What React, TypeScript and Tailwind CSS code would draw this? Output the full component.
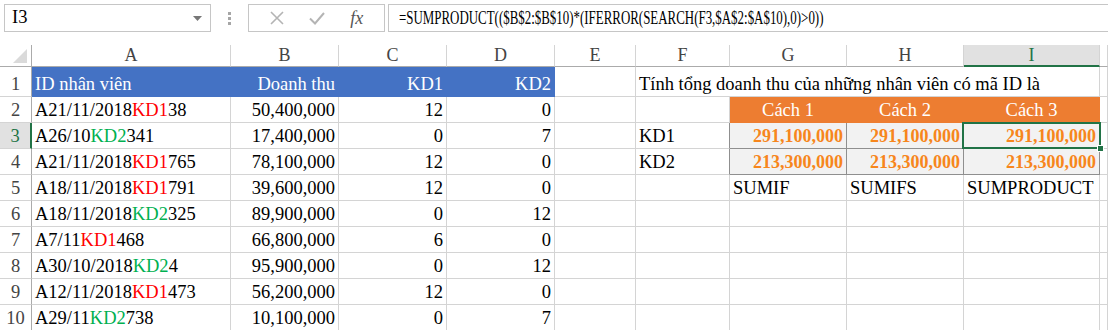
import React from 'react';

type Cell = {
  v?: React.ReactNode;
  align?: 'left' | 'right' | 'center';
  cls?: string;
  span?: boolean;
  selected?: boolean;
};

const COLS = ['A', 'B', 'C', 'D', 'E', 'F', 'G', 'H', 'I', ''];

const GRID = 'border-[#d4d4d4]';
const BLUE = 'bg-[#4472c4] border-[#4472c4] text-white';
const ORANGE = 'bg-[#ed7d31] border-[#ed7d31] text-white';
const TOTAL = 'bg-[#f2f2f2] border-[#8f8f8f] font-bold text-[18px] text-[#f7861c]';

// Mã nhân viên: phần KD1 tô đỏ, KD2 tô xanh
const Id = ({ pre, code, post }: { pre: string; code: 'KD1' | 'KD2'; post: string }) => (
  <span>
    {pre}
    <span className={code === 'KD1' ? 'text-[#ff0000]' : 'text-[#00b050]'}>{code}</span>
    {post}
  </span>
);

const data: [string, 'KD1' | 'KD2', string, string, string, string][] = [
  ['A21/11/2018', 'KD1', '38', '50,400,000', '12', '0'],
  ['A26/10', 'KD2', '341', '17,400,000', '0', '7'],
  ['A21/11/2018', 'KD1', '765', '78,100,000', '12', '0'],
  ['A18/11/2018', 'KD1', '791', '39,600,000', '12', '0'],
  ['A18/11/2018', 'KD2', '325', '89,900,000', '0', '12'],
  ['A7/11', 'KD1', '468', '66,800,000', '6', '0'],
  ['A30/10/2018', 'KD2', '4', '95,900,000', '0', '12'],
  ['A12/11/2018', 'KD1', '473', '56,200,000', '12', '0'],
  ['A29/11', 'KD2', '738', '10,100,000', '0', '7'],
];

const side = (r: number): Cell[] => {
  switch (r) {
    case 2:
      return [{}, {}, { v: 'Cách 1', align: 'center', cls: ORANGE }, { v: 'Cách 2', align: 'center', cls: ORANGE }, { v: 'Cách 3', align: 'center', cls: ORANGE }, {}];
    case 3:
      return [{}, { v: 'KD1', cls: 'border-b-[#d4d4d4] border-r-[#8f8f8f]' }, { v: '291,100,000', align: 'right', cls: TOTAL }, { v: '291,100,000', align: 'right', cls: TOTAL }, { v: '291,100,000', align: 'right', cls: TOTAL, selected: true }, {}];
    case 4:
      return [{}, { v: 'KD2', cls: 'border-b-[#d4d4d4] border-r-[#8f8f8f]' }, { v: '213,300,000', align: 'right', cls: TOTAL }, { v: '213,300,000', align: 'right', cls: TOTAL }, { v: '213,300,000', align: 'right', cls: TOTAL }, {}];
    case 5:
      return [{}, {}, { v: 'SUMIF' }, { v: 'SUMIFS' }, { v: 'SUMPRODUCT' }, {}];
    default:
      return [{}, {}, {}, {}, {}, {}];
  }
};

const rows: Cell[][] = [
  [
    { v: 'ID nhân viên', cls: BLUE },
    { v: 'Doanh thu', align: 'right', cls: BLUE },
    { v: 'KD1', align: 'right', cls: BLUE },
    { v: 'KD2', align: 'right', cls: BLUE },
    {},
    { v: 'Tính tổng doanh thu của những nhân viên có mã ID là', span: true },
    {},
  ],
  ...data.map(([pre, code, post, rev, k1, k2], i) => [
    { v: <Id pre={pre} code={code} post={post} /> },
    { v: rev, align: 'right' as const },
    { v: k1, align: 'right' as const },
    { v: k2, align: 'right' as const },
    ...side(i + 2),
  ]),
];

const CellBox = ({ c }: { c: Cell }) => (
  <div
    className={`relative flex items-end px-[3px] pb-[1px] border-r border-b leading-[22px] whitespace-nowrap ${
      c.span ? 'col-span-4' : ''
    } ${c.align === 'right' ? 'justify-end' : c.align === 'center' ? 'justify-center' : 'justify-start'} ${c.cls ?? GRID}`}
  >
    {c.v}
    {c.selected && (
      <div className="absolute z-10 -left-[2px] -top-[1px] -right-[2px] -bottom-[1px] border-2 border-[#217346]">
        <div className="absolute -right-[5px] -bottom-[5px] w-[7px] h-[7px] bg-[#217346] border border-white" />
      </div>
    )}
  </div>
);

export default function App() {
  return (
    <div className="w-[1108px] h-[330px] overflow-hidden bg-white [font-family:'Liberation_Serif',serif] text-[18.5px] text-black">
      {/* Formula bar */}
      <div className="flex items-center h-[45px] pt-[4px] pb-[13px] pl-[4px]">
        <div className="flex items-center justify-between w-[207px] h-[28px] border border-[#c6c6c6] pl-[7px] pr-[8px]">
          <span>I3</span>
          <svg width="9" height="5" viewBox="0 0 9 5">
            <path d="M0 0h9L4.5 5z" fill="#777" />
          </svg>
        </div>
        <div className="flex flex-col gap-[2px] ml-[17px] mr-[17px]">
          <span className="w-[3px] h-[3px] bg-[#a6a6a6]" />
          <span className="w-[3px] h-[3px] bg-[#a6a6a6]" />
          <span className="w-[3px] h-[3px] bg-[#a6a6a6]" />
        </div>
        <div className="flex items-center justify-around w-[137px] h-[28px] border border-[#c6c6c6] px-[8px]">
          <svg width="14" height="14" viewBox="0 0 14 14">
            <path d="M1 1l12 12M13 1L1 13" stroke="#b4b4b4" strokeWidth="1.6" />
          </svg>
          <svg width="16" height="14" viewBox="0 0 16 14">
            <path d="M1 7.5l5 5L15 2" stroke="#b4b4b4" strokeWidth="2" fill="none" />
          </svg>
          <span className="italic text-[18px] text-[#555]">fx</span>
        </div>
        <div className="flex items-center flex-1 h-[28px] ml-[3px] border border-r-0 border-[#c6c6c6] pl-[10px] overflow-hidden">
          {/* chữ trong thanh công thức hiển thị hẹp hơn */}
          <span className="inline-block whitespace-nowrap origin-left scale-x-[0.68] text-[19px]">
            =SUMPRODUCT(($B$2:$B$10)*(IFERROR(SEARCH(F3,$A$2:$A$10),0)&gt;0))
          </span>
        </div>
      </div>

      {/* Sheet */}
      <div className="grid grid-cols-[32px_199px_108px_108px_108px_81px_94px_117px_117px_136px_1fr] grid-rows-[22px_30px_repeat(9,26px)]">
        <div className="relative border-r border-b border-[#ababab]">
          <svg className="absolute right-[4px] bottom-[3px]" width="14" height="14" viewBox="0 0 14 14">
            <path d="M14 0v14H0z" fill="#dadada" />
          </svg>
        </div>
        {COLS.map((c) => (
          <div
            key={c || 'J'}
            className={`flex items-center justify-center border-r border-r-[#d4d4d4] text-[18px] ${
              c === 'I' ? 'bg-[#e1e1e1] text-[#217346] border-b-2 border-b-[#217346]' : 'border-b border-b-[#ababab] text-[#444]'
            }`}
          >
            {c}
          </div>
        ))}

        {rows.map((row, i) => (
          <React.Fragment key={i}>
            <div
              className={`flex items-end justify-center pb-[1px] leading-[22px] border-b border-b-[#d4d4d4] ${
                i === 2
                  ? 'bg-[#e1e1e1] text-[#217346] border-r-2 border-r-[#217346]'
                  : 'text-[#444] border-r border-r-[#ababab]'
              }`}
            >
              {i + 1}
            </div>
            {row.map((c, j) => (
              <CellBox key={j} c={c} />
            ))}
          </React.Fragment>
        ))}
      </div>
    </div>
  );
}
